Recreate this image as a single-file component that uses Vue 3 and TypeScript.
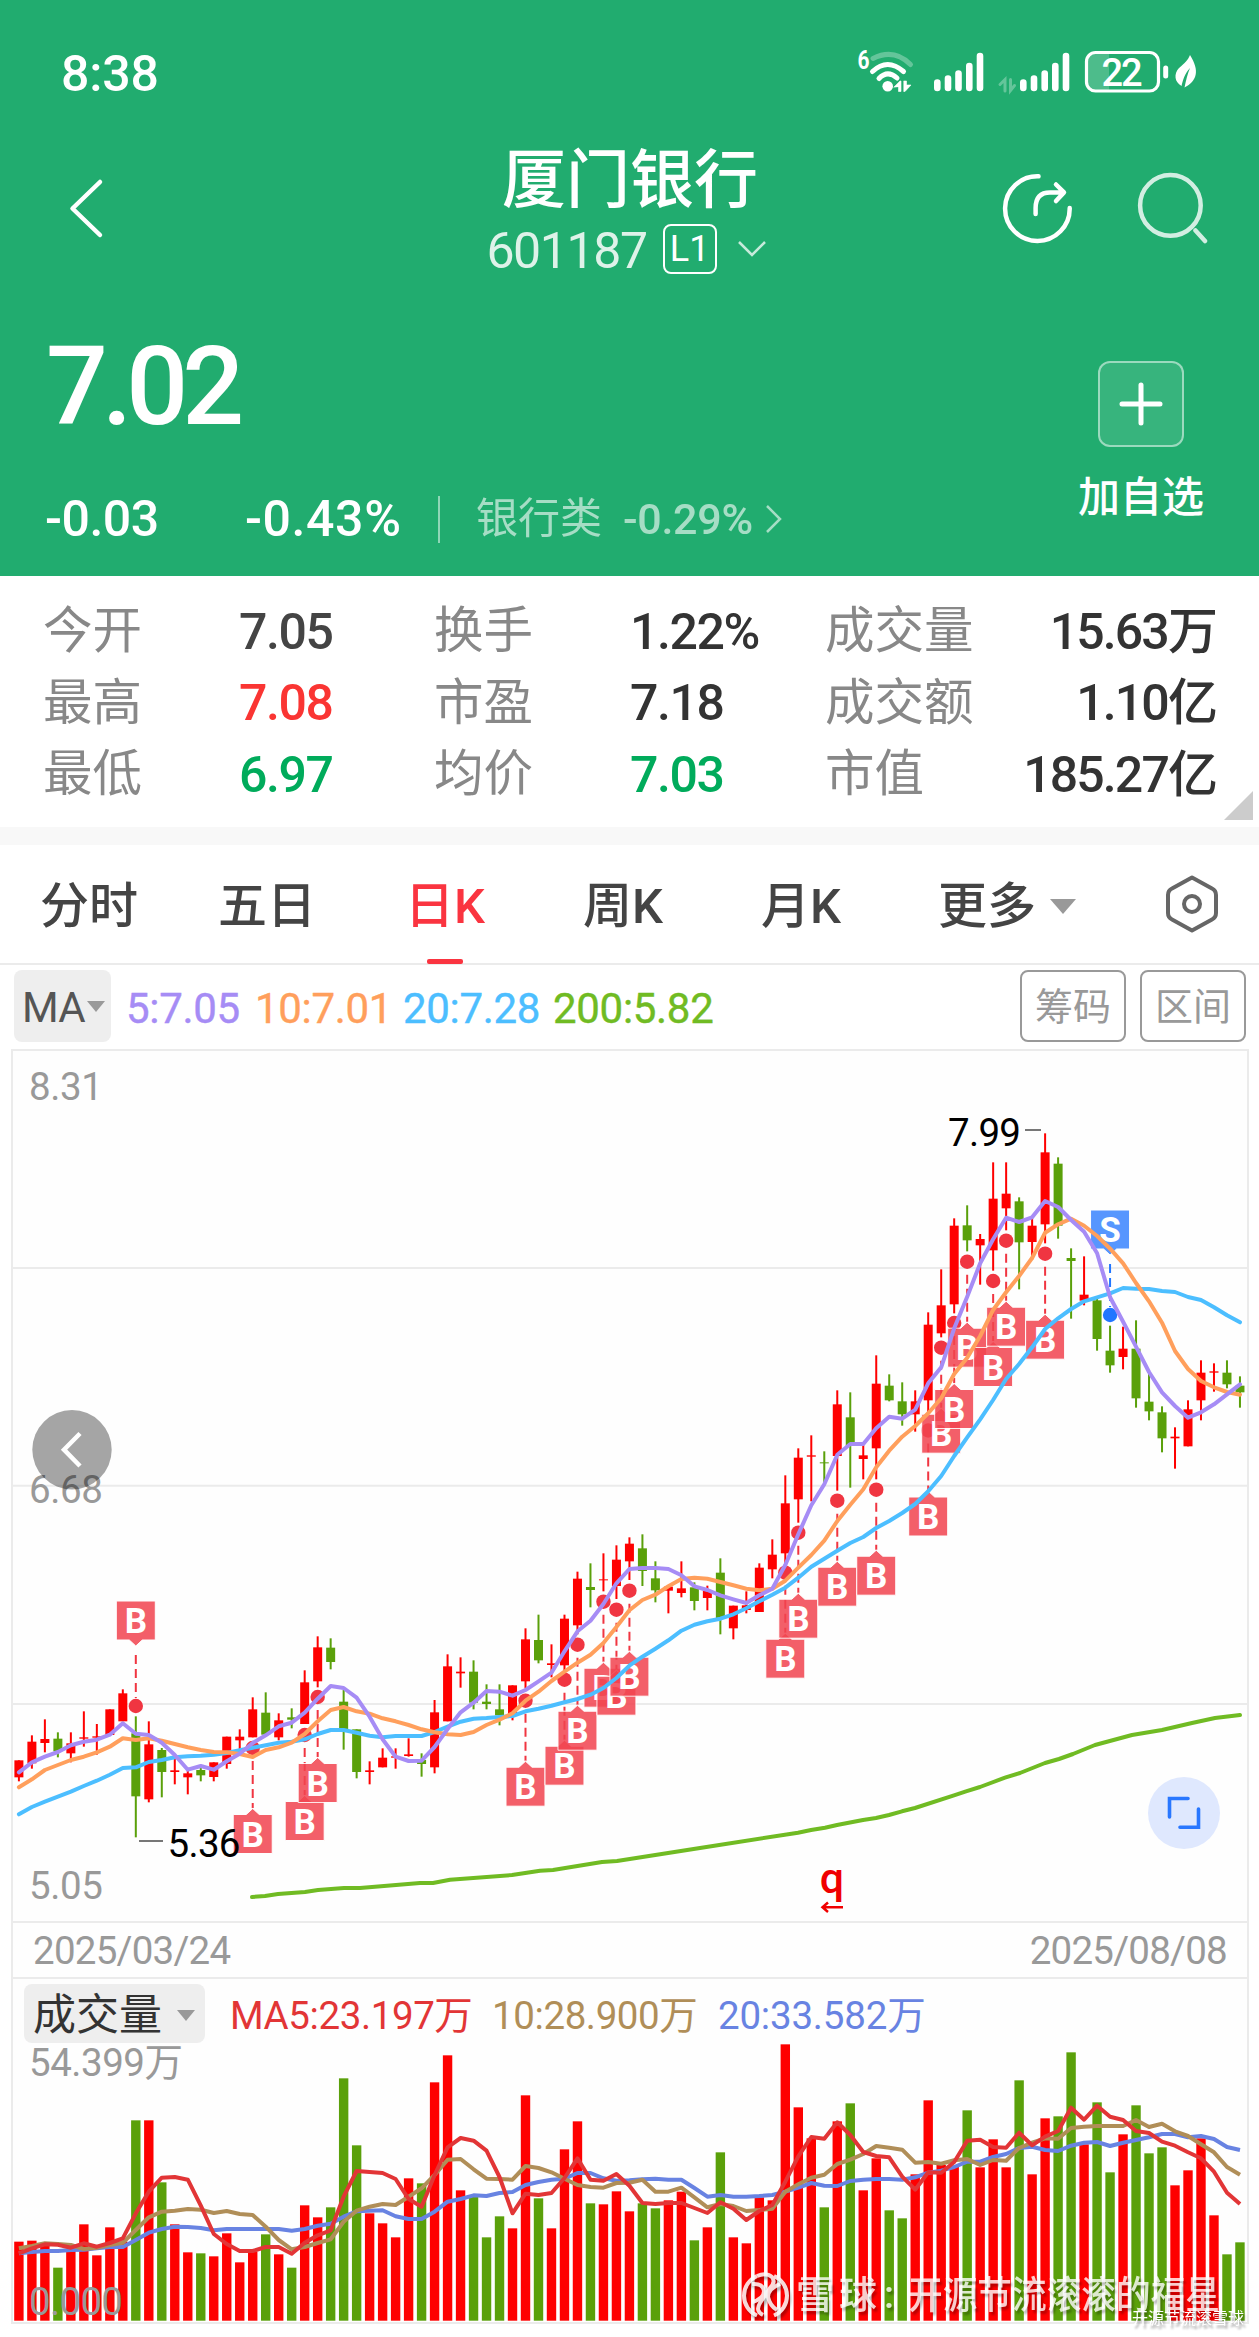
<script setup lang="ts">

type Row = [string, number, number, number, number]

interface Candle {
  x: number
  color: string
  high: number
  low: number
  top: number
  bottom: number
}

interface Marker {
  index: number
  dot: number
  down?: boolean
  sell?: boolean
}

const RED = '#fe0000'
const GREEN = '#5aa00a'
const STEP = 12.99

const quotes = [
  ['今开', '7.05', '#444', '换手', '1.22%', '#333', '成交量', '15.63万'],
  ['最高', '7.08', '#fa3533', '市盈', '7.18', '#333', '成交额', '1.10亿'],
  ['最低', '6.97', '#00ab5b', '均价', '7.03', '#00ab5b', '市值', '185.27亿'],
]

const tabs = ['分时', '五日', '日K', '周K', '月K']

const averages = [
  { text: '5:7.05', color: '#a68cf5', width: 129 },
  { text: '10:7.01', color: '#ff9f5c', width: 148 },
  { text: '20:7.28', color: '#4cbeff', width: 150 },
  { text: '200:5.82', color: '#70bb23', width: 170 },
]

// one block per drawing band: base line, then [color, high, low, top, bottom] in thirds of a pixel
const bands: { base: number; rows: Row[] }[] = [
  {
    base: 1560,
    rows: [
      ['r', 601, 664, 601, 652], ['r', 526, 626, 545, 610], ['r', 478, 577, 537, 549],
      ['g', 517, 592, 536, 574], ['r', 517, 607, 550, 580], ['r', 454, 560, 532, 536],
      ['r', 492, 584, 529, 533], ['r', 448, 525, 448, 525], ['r', 388, 484, 400, 484],
      ['g', 469, 832, 520, 709], ['r', 484, 727, 553, 718], ['g', 564, 712, 570, 636],
      ['r', 595, 673, 631, 636], ['r', 628, 703, 640, 652], ['g', 620, 664, 630, 646],
      ['r', 607, 664, 607, 651], ['r', 530, 626, 530, 612], ['r', 508, 571, 530, 541],
      ['r', 412, 532, 448, 532], ['g', 397, 530, 458, 524], ['r', 460, 541, 481, 532],
      ['g', 445, 505, 472, 479], ['r', 331, 492, 367, 492], ['r', 229, 382, 262, 364],
      ['g', 235, 328, 263, 306], ['g', 390, 569, 425, 508], ['g', 508, 655, 508, 636],
      ['r', 604, 673, 631, 636], ['r', 565, 622, 593, 622], ['r', 565, 626, 589, 593],
      ['r', 535, 590, 583, 588],
    ],
  },
  {
    base: 1480,
    rows: [
      ['g', 820, 890, 840, 852], ['r', 660, 880, 697, 862], ['r', 523, 724, 559, 724],
      ['r', 532, 623, 575, 580], ['g', 541, 688, 575, 668], ['g', 613, 688, 665, 672],
      ['g', 613, 736, 688, 706], ['r', 616, 721, 616, 706], ['r', 445, 625, 478, 604],
      ['g', 404, 550, 480, 541], ['r', 493, 592, 550, 555], ['r', 404, 580, 416, 556],
      ['r', 275, 463, 296, 436], ['g', 250, 382, 321, 330], ['r', 220, 334, 298, 301],
      ['r', 196, 357, 239, 318], ['r', 172, 300, 191, 244], ['g', 163, 318, 205, 273],
      ['g', 244, 367, 295, 331], ['r', 318, 400, 320, 332], ['r', 244, 352, 325, 339],
      ['g', 307, 391, 322, 363], ['r', 317, 391, 331, 354], ['g', 235, 463, 278, 416],
      ['r', 377, 478, 377, 445], ['r', 334, 400, 376, 390], ['r', 250, 396, 263, 396],
      ['r', 178, 295, 224, 268],
    ],
  },
  {
    base: 1300,
    rows: [
      ['r', 526, 820, 610, 760], ['r', 445, 668, 473, 598], ['r', 406, 604, 466, 470],
      ['g', 454, 556, 487, 490], ['r', 271, 572, 313, 468], ['g', 277, 563, 352, 438],
      ['r', 430, 538, 466, 477], ['r', 166, 538, 251, 445], ['g', 223, 304, 257, 301],
      ['g', 247, 377, 304, 343], ['r', 271, 395, 304, 343],
    ],
  },
  {
    base: 1080,
    rows: [
      ['r', 697, 1000, 734, 961], ['r', 568, 772, 676, 760], ['r', 415, 700, 437, 673],
      ['g', 376, 514, 436, 481], ['r', 462, 614, 477, 496], ['r', 247, 572, 356, 511],
      ['r', 247, 451, 341, 385], ['g', 352, 628, 364, 487], ['r', 415, 540, 437, 486],
      ['r', 160, 490, 217, 433], ['g', 232, 476, 251, 437], ['g', 505, 716, 534, 543],
      ['r', 529, 676, 644, 662], ['g', 655, 812, 661, 777], ['g', 737, 878, 812, 856],
      ['r', 740, 868, 806, 831], ['g', 721, 983, 806, 955], ['g', 880, 1021, 965, 994],
      ['g', 979, 1117, 997, 1075], ['r', 1042, 1166, 1070, 1075], ['r', 961, 1099, 988, 1099],
      ['r', 841, 1021, 878, 961], ['r', 850, 935, 874, 878], ['g', 841, 925, 878, 913],
      ['g', 889, 983, 917, 937],
    ],
  },
]

const xAt = (i: number) => 18.9 + i * STEP

const candles: Candle[] = bands
  .flatMap(({ base, rows }) => rows.map(([c, ...v]) => ({ c, v: v.map((n) => base + n / 3) })))
  .map(({ c, v }, i) => ({
    x: xAt(i),
    color: c === 'r' ? RED : GREEN,
    high: v[0],
    low: v[1],
    top: v[2],
    bottom: v[3],
  }))

// joins [base, values] runs into one polyline
function line(...runs: [number, number[]][]) {
  return runs
    .flatMap(([base, values]) => values.map((v) => base + v / 3))
    .map((y, i) => `${xAt(i).toFixed(1)},${y.toFixed(1)}`)
    .join(' ')
}

const ma5 = line(
  [1560, [637, 607, 590, 576, 556, 545, 539, 524, 490, 521, 525, 548, 585, 629, 618, 629, 604, 581, 549, 526, 499, 488, 458, 416, 378, 384, 413, 470, 538, 590, 603]],
  [1480, [842, 801, 747, 697, 668, 633, 635, 647, 630, 604, 578, 514, 454, 422, 372, 310, 267, 264, 264, 267, 286, 319, 330, 346, 358, 369, 346, 326]],
  [1300, [795, 703, 616, 553, 464, 432, 432, 385, 350, 356, 329]],
  [1080, [910, 862, 745, 650, 550, 478, 413, 426, 412, 363, 381, 420, 455, 520, 652, 725, 800, 876, 937, 978, 1013, 997, 973, 943, 913]],
)

const ma10 = line(
  [1560, [682, 658, 630, 615, 600, 590, 577, 560, 535, 540, 535, 542, 552, 562, 570, 576, 577, 582, 591, 570, 562, 548, 522, 484, 450, 441, 454, 461, 475, 484, 495]],
  [1480, [748, 757, 763, 765, 756, 735, 719, 700, 662, 635, 603, 575, 548, 524, 489, 441, 391, 360, 344, 319, 297, 293, 296, 306, 316, 326, 331, 326]],
  [1300, [842, 803, 765, 722, 663, 614, 568, 502, 452, 410, 378]],
  [1080, [1000, 955, 882, 833, 768, 690, 637, 588, 534, 458, 433, 416, 437, 468, 506, 550, 609, 664, 728, 813, 867, 903, 922, 936, 944]],
)

const ma20 = line(
  [1560, [763, 741, 725, 710, 695, 678, 662, 644, 624, 622, 606, 600, 592, 589, 587, 584, 579, 571, 563, 556, 548, 545, 538, 522, 510, 510, 518, 527, 532, 528, 528]],
  [1480, [768, 756, 740, 725, 716, 714, 711, 708, 694, 686, 677, 667, 657, 644, 624, 594, 557, 530, 506, 481, 452, 434, 424, 416, 403, 385, 364, 344]],
  [1300, [863, 833, 800, 776, 752, 729, 711, 684, 663, 639, 612]],
  [1080, [1234, 1188, 1128, 1072, 1018, 960, 897, 852, 802, 747, 715, 687, 664, 652, 640, 624, 626, 627, 633, 636, 651, 660, 682, 706, 727]],
)

const ma200 = '252,1897 265,1896 278,1894 305,1892 318,1890 344,1888 360,1888 420,1883 433,1883 450,1879.7 512,1875 540,1870.7 553,1870 602,1862 617,1861 700,1848 798,1832.7 811,1830 825,1827.7 837,1825 863,1820 876,1818 889,1815 902,1811.3 915,1808 954,1795.3 966,1791.3 980,1787 1005,1777.7 1020,1773 1045,1763 1059,1759 1073,1754 1095,1745 1132,1735 1162,1730 1192,1723 1215,1718 1240,1715'

const markers: Marker[] = [
  { index: 9, dot: 1706, down: true },
  { index: 18, dot: 1748 },
  { index: 22, dot: 1735 },
  { index: 23, dot: 1697 },
  { index: 39, dot: 1700.7 },
  { index: 42, dot: 1679.7 },
  { index: 43, dot: 1644.7 },
  { index: 45, dot: 1601.7 },
  { index: 46, dot: 1609.7 },
  { index: 47, dot: 1590.7 },
  { index: 59, dot: 1572.7 },
  { index: 60, dot: 1532.7 },
  { index: 63, dot: 1500.7 },
  { index: 66, dot: 1489.7 },
  { index: 70, dot: 1430.5 },
  { index: 71, dot: 1347.7 },
  { index: 72, dot: 1323 },
  { index: 73, dot: 1261.7 },
  { index: 75, dot: 1281 },
  { index: 76, dot: 1240.7 },
  { index: 79, dot: 1253.7 },
  { index: 84, dot: 1315, down: true, sell: true },
]

const tags = markers.map((m) => {
  const top = m.down ? -105 : 66.5
  const tip = m.down ? 'h-13 l-6.5,6 l-6.5,-6 h-13' : 'h-39'
  const lid = m.down ? 'h39' : 'h13 l6.5,-6 l6.5,6 h13'
  return {
    x: xAt(m.index),
    y: m.dot,
    top,
    path: `M-19.5,${top} ${lid} v39 ${tip} z`,
    stem: m.down ? [-51, -8] : [13, 60],
    text: m.sell ? 'S' : 'B',
    fill: m.sell ? '#3a84ff' : '#f24450',
    dot: m.sell ? '#2176ff' : '#f03541',
  }
})

const volumeTops = [
  965, 962, 975, 1043, 993, 913, 1006, 922, 965, 601, 601, 787, 913, 997, 1000, 1009, 940, 1027, 995, 943,
  1003, 1043, 856, 892, 862, 475, 676, 880, 910, 952, 775, 790, 487, 406, 811, 826, 952, 889, 925, 526,
  835, 925, 688, 604, 850, 853, 814, 874, 850, 865, 841, 815, 961, 922, 697, 952, 970, 832, 841, 373,
  562, 655, 862, 604, 550, 811, 715, 871, 895, 763, 541, 735, 740, 571, 742, 658, 742, 481, 763, 595,
  589, 397, 673, 547, 757, 643, 556, 700, 682, 796, 751, 655, 886, 1003, 967,
].map((v) => 1920 + v / 3)

const vol5 = line([1920, [
  1000, 985, 973, 974, 983, 970, 980, 969, 955, 880, 815, 773, 771, 779, 857, 942, 972, 993, 993, 981,
  981, 1001, 968, 946, 931, 830, 753, 756, 759, 777, 837, 860, 765, 682, 654, 662, 692, 771, 880, 821,
  825, 819, 774, 715, 779, 782, 762, 797, 849, 852, 849, 849, 864, 879, 847, 866, 900, 873, 855, 785,
  709, 651, 656, 607, 645, 696, 708, 712, 770, 809, 757, 758, 726, 662, 659, 681, 683, 638, 676, 650,
  633, 563, 599, 557, 590, 600, 633, 639, 665, 677, 697, 715, 755, 818, 852,
]])

const vol10 = line([1920, [
  985, 978, 970, 972, 975, 987, 983, 975, 968, 930, 892, 875, 872, 867, 869, 879, 873, 882, 885, 920,
  960, 988, 981, 969, 958, 905, 872, 860, 852, 855, 830, 805, 765, 719, 717, 748, 776, 777, 779, 738,
  744, 757, 776, 795, 801, 803, 789, 788, 779, 815, 815, 803, 832, 862, 852, 858, 873, 870, 866, 815,
  793, 773, 764, 732, 719, 702, 678, 683, 689, 728, 726, 731, 721, 717, 735, 720, 722, 684, 668, 655,
  656, 624, 620, 618, 618, 618, 600, 621, 611, 634, 648, 673, 697, 741, 764,
]])

const vol20 = line([1920, [
  1000, 996, 993, 993, 990, 989, 985, 981, 981, 960, 938, 927, 920, 921, 924, 931, 927, 927, 927, 927,
  927, 932, 927, 917, 911, 890, 874, 872, 871, 889, 897, 897, 875, 845, 837, 826, 828, 819, 816, 795,
  786, 779, 776, 759, 759, 775, 782, 781, 778, 776, 779, 779, 804, 830, 825, 830, 830, 828, 825, 815,
  803, 789, 797, 798, 783, 779, 777, 777, 779, 772, 758, 752, 741, 725, 725, 711, 702, 684, 680, 690,
  693, 677, 668, 666, 678, 668, 660, 652, 642, 642, 652, 648, 657, 681, 690,
]])

</script>

<template>
  <div class="page">
    <header class="header">
      <div class="status">
        <span class="clock">8:38</span>
        <svg class="status-icons" width="350" height="54" viewBox="855 42 350 54" fill="none" stroke="#fff" stroke-linecap="round">
          <text x="857.5" y="69" font-size="25" font-weight="700" fill="#fff" stroke="none" textLength="12" lengthAdjust="spacingAndGlyphs">6</text>
          <path d="M873 58.5 Q894 48 910.500 64.500" stroke-width="5" opacity=".3" />
          <path d="M872.500 71.500 Q887.500 57.500 903.500 71.500" stroke-width="5" />
          <path d="M879 78.500 Q887.500 69.500 897 78" stroke-width="5" />
          <circle cx="887.700" cy="86.300" r="5.300" fill="#fff" stroke="none" />
          <path d="M894 87 l6 -6 h1 v10.500 h-2.500 v-4.500z M904 81 h2.500 v4 h4.500 l-6 6.500 h-1z" fill="#fff" stroke="#fff" stroke-width=".6" />
          <path d="M937.300 82.500 v5.500 M948 78.500 v9.500 M958.500 73.500 v14.500 M969.300 66 v22 M980 56 v32" stroke-width="6.600" />
          <path d="M1000 84.500 l5 -5 v11.500 M1010.500 79.500 v11 l4 -5" stroke-width="3" opacity=".3" />
          <path d="M1023.300 82.500 v5.500 M1034 78.500 v9.500 M1044.700 73.500 v14.500 M1055.300 66 v22 M1066 56 v32" stroke-width="6.600" />
          <path d="M1096 53.500 h13 v37 h-13 q-9 0 -9 -9 v-19 q0 -9 9 -9z" fill="#fff" stroke="none" opacity=".2" />
          <rect x="1086.500" y="52.500" width="72" height="38.500" rx="9" stroke-width="3.200" />
          <text x="1122" y="86" font-size="38" font-weight="500" text-anchor="middle" fill="#fff" stroke="none" textLength="41">22</text>
          <path d="M1165.700 68 v8" stroke-width="5" />
          <path d="M1190 55 C1200 71 1197 81 1184.500 87.500 C1186 80 1187.500 74 1190 68 C1184.500 74 1183 80 1181.500 86 C1174.500 82 1173.500 74 1179 68 C1185 63 1188 60 1190 55z" fill="#fff" stroke="none" />
        </svg>
      </div>

      <div class="title-bar">
        <svg class="back" width="40" height="66" viewBox="66 178 40 66" fill="none" stroke="#fff" stroke-width="4.500" stroke-linecap="round" stroke-linejoin="round">
          <path d="M100 184 L72.500 210.500 L100 237" />
        </svg>
        <div class="title">
          <h1>厦门银行</h1>
          <div class="code">
            <span class="number">601187</span>
            <span class="level">L1</span>
            <svg width="32" height="20" viewBox="0 0 32 20" fill="none" stroke="#fff" stroke-width="2.500" opacity=".75">
              <path d="M3 3 L16 16 L29 3" />
            </svg>
          </div>
        </div>
        <svg class="actions" width="216" height="76" viewBox="1000 170 216 76" fill="none" stroke="#fff" stroke-width="4.500" stroke-linecap="round" stroke-linejoin="round">
          <path d="M1038.500 176.300 A32.300 32.300 0 1 0 1069.700 208" />
          <path d="M1035.600 214 V208 Q1035.600 192.400 1050 192.400 H1063.500 M1056 184.500 L1064 192.400 L1056 201" />
          <g opacity=".8">
            <circle cx="1170.400" cy="205.400" r="30.300" />
            <path d="M1195.500 230.500 L1205 241" />
          </g>
        </svg>
      </div>

      <div class="price-area">
        <div class="price-box">
          <div class="price">7.02</div>
          <div class="changes">
            <span class="change">-0.03</span>
            <span class="percent">-0.43%</span>
            <i class="divider" />
            <span class="sector">银行类</span>
            <span class="sector-change">-0.29%</span>
            <svg width="20" height="32" viewBox="0 0 20 32" fill="none" stroke="#fff" stroke-width="2.500" opacity=".6">
              <path d="M3 3 L16 16 L3 29" />
            </svg>
          </div>
        </div>
        <div class="add">
          <div class="add-box">
            <svg width="44" height="44" viewBox="0 0 44 44" stroke="#fff" stroke-width="5" stroke-linecap="round">
              <path d="M22 3 V41 M3 22 H41" />
            </svg>
          </div>
          <span>加自选</span>
        </div>
      </div>
    </header>

    <section class="quotes">
      <div v-for="q in quotes" :key="q[0]" class="quote-row">
        <span class="label">{{ q[0] }}</span>
        <span class="value" :style="{ color: q[2] }">{{ q[1] }}</span>
        <span class="label">{{ q[3] }}</span>
        <span class="value" :style="{ color: q[5] }">{{ q[4] }}</span>
        <span class="label">{{ q[6] }}</span>
        <span class="value amount">{{ q[7] }}</span>
      </div>
      <i class="corner" />
    </section>

    <nav class="tabs">
      <span v-for="tab in tabs" :key="tab" class="tab" :class="{ active: tab === '日K' }">{{ tab }}</span>
      <span class="tab more">更多<i class="caret" /></span>
      <svg class="settings" width="60" height="64" viewBox="0 0 60 64" fill="none" stroke="#666" stroke-width="4" stroke-linejoin="round">
        <path d="M30 5.500 L50 16.500 Q54 18.500 54 23 V41 Q54 45.500 50 47.500 L30 58.500 L10 47.500 Q6 45.500 6 41 V23 Q6 18.500 10 16.500z" />
        <circle cx="30" cy="32" r="8" />
      </svg>
    </nav>

    <div class="indicator">
      <span class="picker">MA<i class="caret small" /></span>
      <span v-for="a in averages" :key="a.text" class="average" :style="{ color: a.color, width: a.width + 'px' }">{{ a.text }}</span>
      <button class="outline first">筹码</button>
      <button class="outline">区间</button>
    </div>

    <main class="frame">
      <svg class="kline" width="1234" height="870" viewBox="13 1051 1234 870">
        <path d="M13 1268 H1247 M13 1485.800 H1247 M13 1704 H1247" stroke="#ebebeb" stroke-width="2" />

        <g class="axis">
          <text x="29" y="1100" textLength="74">8.31</text>
          <text x="29" y="1502.700" textLength="74">6.68</text>
          <text x="29" y="1898.700" textLength="74">5.05</text>
        </g>

        <g v-for="(c, i) in candles" :key="i" :fill="c.color">
          <rect :x="c.x - 1" :y="c.high" width="2" :height="c.low - c.high" />
          <rect :x="c.x - 4.500" :y="c.top" width="9" :height="c.bottom - c.top" />
        </g>

        <g v-for="(t, i) in tags" :key="'t' + i" :transform="`translate(${t.x} ${t.y})`">
          <path :d="`M0,${t.stem[0]} V${t.stem[1]}`" :stroke="t.dot" stroke-width="2" stroke-dasharray="9 5" />
          <circle r="7.200" :fill="t.dot" />
          <path :d="t.path" :fill="t.fill" stroke="#fff" stroke-width="1" opacity=".85" />
          <text class="tag-text" x="0" :y="t.top + 32">{{ t.text }}</text>
        </g>

        <g fill="none" stroke-width="4" stroke-linecap="round" stroke-linejoin="round">
          <polyline :points="ma20" stroke="#4cbeff" />
          <polyline :points="ma10" stroke="#ff9f5c" />
          <polyline :points="ma5" stroke="#a68cf5" />
          <polyline :points="ma200" stroke="#70bb23" />
        </g>

        <g class="extreme">
          <text x="948" y="1145.500" textLength="73">7.99</text>
          <text x="167.500" y="1856.700" textLength="73">5.36</text>
          <path d="M1025 1130 H1041 M139 1841 H163" stroke="#777" stroke-width="2" />
        </g>

        <text class="event" x="832" y="1892.500">q</text>
        <path d="M843 1907.300 H823 M828 1902.500 L822.500 1907.300 L828 1912" fill="none" stroke="#f00000" stroke-width="2.500" />

        <circle cx="72" cy="1449.700" r="39.700" fill="#000" opacity=".35" />
        <path d="M80 1433.500 L64 1449.700 L80 1466" fill="none" stroke="#fff" stroke-width="4.500" />

        <circle cx="1184" cy="1813" r="36" fill="#dfe8fe" />
        <path d="M1188 1798.500 H1169.500 V1817 M1198.500 1809 V1827.300 H1180" fill="none" stroke="#2977ff" stroke-width="3.600" stroke-linecap="round" />
      </svg>

      <div class="dates">
        <span>2025/03/24</span>
        <span>2025/08/08</span>
      </div>

      <div class="volume-legend">
        <span class="volume-picker">成交量<i class="caret small" /></span>
        <span class="v5">MA5:23.197万</span>
        <span class="v10">10:28.900万</span>
        <span class="v20">20:33.582万</span>
      </div>

      <svg class="volume" width="1234" height="276" viewBox="13 2046 1234 276">
        <rect v-for="(y, i) in volumeTops" :key="i" :x="xAt(i) - 4.700" :y="y" width="9.400" :height="2320.700 - y" :fill="candles[i].color" />
        <g fill="none" stroke-width="4" stroke-linejoin="round">
          <polyline :points="vol20" stroke="#6883e2" />
          <polyline :points="vol10" stroke="#b08e58" />
          <polyline :points="vol5" stroke="#e23536" />
        </g>
        <g class="axis">
          <text x="29" y="2075.500" textLength="154">54.399万</text>
          <text x="29" y="2314.700" textLength="94">0.000</text>
        </g>
        <g class="watermark">
          <g fill="none" stroke="#fff" stroke-width="4" opacity=".85">
            <path d="M757 2276 A21.500 21.500 0 0 0 757 2315.500 M774 2276 A21.500 21.500 0 0 1 774 2315.500" />
            <path d="M757 2276 Q766 2272 772 2277 Q776 2282 770 2288 L760 2303 Q755 2311 763 2315" />
            <path d="M752 2284 Q763 2283 764 2291 Q764 2299 752 2302 M780 2284 Q768 2289 768 2297 Q770 2306 777 2310" />
          </g>
          <text x="796" y="2308" textLength="81">雪球</text>
          <text x="884" y="2308">:</text>
          <text x="908" y="2308" textLength="312" lengthAdjust="spacingAndGlyphs">开源节流滚滚的福星</text>
          <text class="signature" x="1132" y="2324" textLength="112">开源节流滚雪球</text>
        </g>
      </svg>
    </main>
  </div>
</template>

<style>
body {
  margin: 0;
  background: #fff;
}
</style>

<style scoped>
.page {
  width: 1259px;
  height: 2337px;
  overflow: hidden;
  display: flex;
  flex-direction: column;
  background: #fff;
  font-family: Roboto, "Noto Sans CJK SC", sans-serif;
  line-height: 1;
}

.page svg {
  display: block;
  flex: none;
}

.header {
  height: 576px;
  box-sizing: border-box;
  background: #21ac6f;
  color: #fff;
  display: flex;
  flex-direction: column;
}

.status {
  display: flex;
  justify-content: space-between;
  height: 96px;
  padding: 42px 54px 0 61px;
  box-sizing: border-box;
}

.clock {
  padding-top: 7px;
  font-size: 50px;
  font-weight: 500;
  letter-spacing: -0.2px;
}

.title-bar {
  display: flex;
  justify-content: space-between;
  height: 194px;
  padding: 0 43px 0 66px;
}

.back {
  margin-top: 80px;
}

.actions {
  margin-top: 74px;
}

.title {
  display: flex;
  flex-direction: column;
  align-items: center;
  padding-top: 52px;
  margin-left: 154px;
}

.title h1 {
  margin: 0;
  font-size: 64px;
  line-height: 66px;
  font-weight: 500;
}

.code {
  display: flex;
  align-items: center;
  margin: 10px 6px 0 0;
}

.number {
  position: relative;
  top: 2px;
  font-size: 50px;
  letter-spacing: -1.4px;
  opacity: 0.85;
}

.level {
  width: 54px;
  height: 50px;
  margin: 0 19px 0 16px;
  box-sizing: border-box;
  border: 2px solid #fff;
  border-radius: 8px;
  font-size: 36px;
  line-height: 47px;
  text-align: center;
}

.price-area {
  display: flex;
  justify-content: space-between;
  padding: 43px 55px 0 45px;
}

.price {
  padding-left: 1px;
  font-size: 109px;
  font-weight: 500;
  letter-spacing: -6px;
  line-height: 108px;
}

.changes {
  display: flex;
  align-items: center;
  margin-top: 53px;
  height: 50px;
  font-size: 50px;
  font-weight: 500;
  white-space: nowrap;
}

.change {
  width: 200px;
  letter-spacing: -0.5px;
}

.percent {
  width: 193px;
  letter-spacing: 0.6px;
}

.divider {
  width: 2px;
  height: 47px;
  margin-right: 36px;
  background: rgba(255, 255, 255, 0.5);
}

.sector {
  width: 147px;
  font-size: 42px;
  font-weight: 400;
  opacity: 0.6;
}

.sector-change {
  width: 141px;
  font-size: 43px;
  letter-spacing: -0.3px;
  opacity: 0.6;
}

.add {
  display: flex;
  flex-direction: column;
  align-items: center;
  padding-top: 28px;
  font-size: 42px;
  font-weight: 500;
}

.add-box {
  display: flex;
  align-items: center;
  justify-content: center;
  width: 86px;
  height: 86px;
  margin-bottom: 30px;
  box-sizing: border-box;
  border: 2px solid rgba(255, 255, 255, 0.5);
  border-radius: 12px;
  background: rgba(255, 255, 255, 0.1);
}

.quotes {
  position: relative;
  height: 251px;
  box-sizing: border-box;
  padding: 20px 43px 0;
  font-size: 50px;
}

.quote-row {
  display: grid;
  grid-template-columns: 196px 195px 196px 195px 160px 1fr;
  align-items: center;
  height: 71.5px;
  color: #333;
  white-space: nowrap;
}

.label {
  color: #888;
  font-size: 49.5px;
}

.value {
  font-weight: 500;
  letter-spacing: -1.4px;
}

.amount {
  letter-spacing: -1.9px;
  text-align: right;
}

.corner {
  position: absolute;
  right: 6px;
  bottom: 7px;
  border-left: 29px solid transparent;
  border-bottom: 29px solid #ccc;
}

.tabs {
  display: flex;
  align-items: center;
  height: 138px;
  box-sizing: border-box;
  border-top: 18px solid #f8f8f8;
  border-bottom: 2px solid #ebebeb;
  font-size: 49px;
  font-weight: 500;
  color: #444;
}

.tab {
  position: relative;
  width: 178px;
  padding-top: 4px;
  text-align: center;
}

.tab.active {
  color: #fa3440;
}

.tab.active::after {
  content: "";
  position: absolute;
  left: 71px;
  bottom: -33px;
  width: 36px;
  height: 5px;
  border-radius: 2px;
  background: #fa3440;
}

.tab.more {
  display: flex;
  align-items: center;
  width: 224px;
  margin-left: 48px;
}

.caret {
  margin-left: 14px;
  border-left: 13px solid transparent;
  border-right: 13px solid transparent;
  border-top: 15px solid #999;
}

.caret.small {
  margin-left: 2px;
  border-left-width: 9px;
  border-right-width: 9px;
  border-top-width: 11px;
}

.indicator {
  display: flex;
  align-items: center;
  height: 84px;
  box-sizing: border-box;
  padding: 5px 13px 7px 14px;
  font-size: 42px;
}

.picker {
  display: flex;
  align-items: center;
  width: 97px;
  height: 72px;
  margin-right: 15px;
  padding: 4px 0 0 8px;
  box-sizing: border-box;
  border-radius: 8px;
  background: #eee;
  color: #555;
  letter-spacing: -0.8px;
}

.picker .caret {
  margin-bottom: 4px;
}

.average {
  padding-top: 5px;
  letter-spacing: -0.3px;
  white-space: nowrap;
  -webkit-text-stroke: 0.4px currentColor;
}

.outline {
  width: 106px;
  height: 72px;
  margin-left: 14px;
  padding: 2px 0 0;
  border: 2px solid #999;
  border-radius: 8px;
  background: none;
  color: #999;
  font: inherit;
  font-size: 38px;
}

.outline.first {
  margin-left: auto;
}

.frame {
  width: 1238px;
  margin-left: 11px;
  box-sizing: border-box;
  border: 2px solid #ebebeb;
  background: #fefefe;
}

.kline text,
.volume text {
  font-size: 38.5px;
}

.axis {
  fill: #999;
}

.kline .tag-text {
  font-size: 35px;
  font-weight: 700;
  fill: #fff;
  text-anchor: middle;
}

.extreme {
  fill: #000;
}

.kline .event {
  font-size: 43px;
  font-weight: 500;
  fill: #f00000;
  text-anchor: middle;
}

.dates {
  display: flex;
  justify-content: space-between;
  height: 58px;
  padding: 0 20px 0 20px;
  box-sizing: border-box;
  border-top: 2px solid #ebebeb;
  border-bottom: 2px solid #ebebeb;
  color: #999;
  font-size: 38.5px;
  letter-spacing: -0.75px;
  line-height: 55px;
}

.volume-legend {
  display: flex;
  height: 67px;
  padding: 5px 0 0 11px;
  box-sizing: border-box;
  font-size: 38.5px;
  letter-spacing: -0.4px;
  line-height: 63px;
  white-space: nowrap;
}

.volume-picker {
  display: flex;
  align-items: center;
  width: 181px;
  height: 59px;
  margin-right: 25px;
  padding: 3px 0 0 9px;
  box-sizing: border-box;
  border-radius: 8px;
  background: #eee;
  color: #333;
  font-size: 43px;
  letter-spacing: 0;
}

.volume-picker .caret {
  margin-left: 15px;
}

.v5 {
  width: 262px;
  color: #e23536;
}

.v10 {
  width: 226px;
  color: #b08e58;
}

.v20 {
  color: #6883e2;
  letter-spacing: -0.2px;
}

.volume {
  overflow: visible;
}

.watermark text {
  font-size: 38px;
  font-weight: 500;
  fill: rgba(255, 255, 255, 0.8);
}

.watermark {
  filter: drop-shadow(2px 3px 1px rgba(0, 0, 0, 0.35));
}

.watermark .signature {
  font-size: 16px;
  font-weight: 400;
  fill: #fff;
}
</style>
